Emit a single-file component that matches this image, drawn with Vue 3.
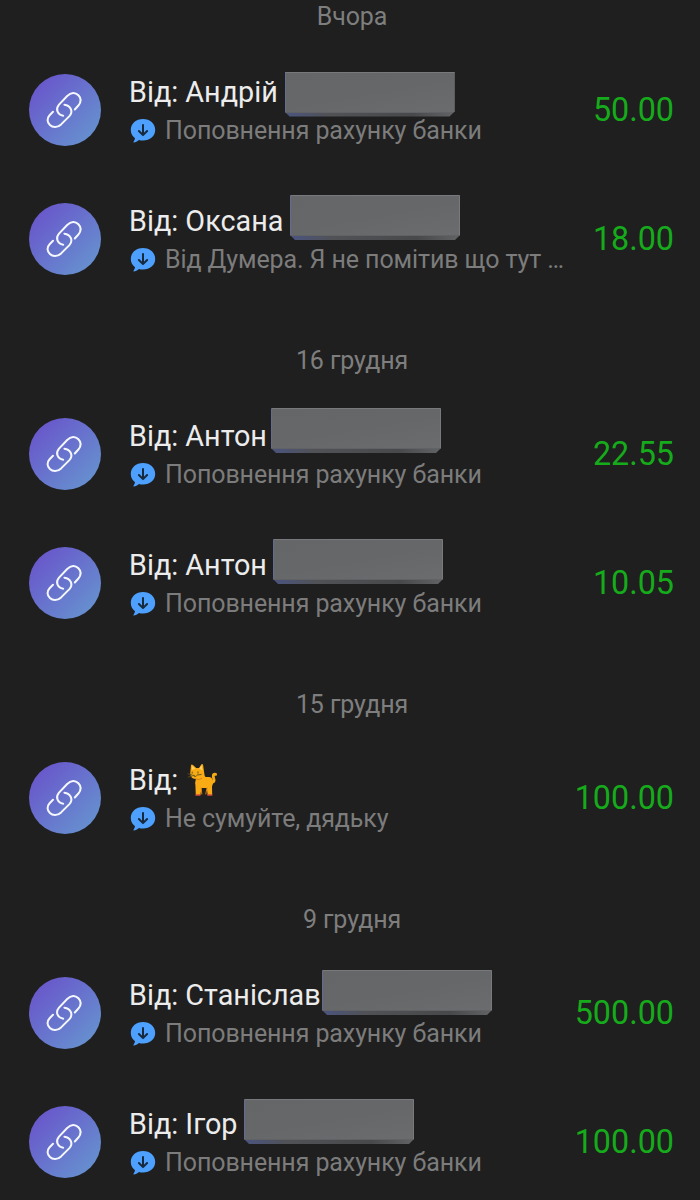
<template>
  <main class="history">
    <section v-for="group in groups" :key="group.date" class="group">
      <h2 class="group__date">{{ group.date }}</h2>
      <article v-for="(item, index) in group.items" :key="index" class="operation">
        <div class="operation__avatar">
          <svg class="link-icon" viewBox="0 0 40 40">
            <path d="M18.2 25.8C12.3 24.6 10.2 19 14 14.6L22.2 6C26 2.2 30.3 2.1 33.4 5.3C36.4 8.4 36.1 12.2 33.4 15.5L29.8 19.5" />
            <path d="M19.4 14.7C25.7 15.5 28.5 21.6 24.4 26.1L16.1 34.4C12.4 37.8 7.8 37.9 4.9 35C1.9 32.2 1.8 28.2 4.6 25.2L8 21.8" />
          </svg>
        </div>
        <div class="operation__info">
          <div class="operation__name">
            <span>Від: {{ item.name }}</span>
            <svg v-if="item.cat" class="cat" viewBox="0 0 32 34">
              <path class="cat__tail" d="M22 17C25 21 28 19 26.7 15.5C25.8 12.8 26.2 10.4 28.6 11.4" />
              <path class="cat__body" d="M4 2.2Q4.5 .7 6 2L9.2 5H12L14.3 1.5Q15.5 .2 16.1 2L17 8.5C17.5 11.2 17.4 13 18.5 14H22C25.2 14.2 26.5 17 26 20.5L25 23.5L25.2 32H20.7L19.8 25H14.5L13.4 32H8.8L8.4 22C7.6 19.7 8.8 17.7 8.9 16C5 16 2.9 13.2 3.3 9.5Z" />
              <path class="cat__ear" d="M5 3L5.2 7L8.3 5.2ZM12.2 5.4L14.7 2.2L15.6 7.8Z" />
              <path class="cat__shade" d="M9 16.1Q12 17.5 14.8 15.4M14.2 25L14.8 31M20 25L18.8 31" />
              <path class="cat__face" d="M5.2 9V10.3M11 8.8V10.2M5.8 12.4H7.3M6.8 13Q8 14.5 9.4 13M5 12L1 10.8M5 13.2L1.2 14M10.2 12L14.2 11.5" />
              <path class="cat__feet" d="M9 32H13M20.8 32H24.8" />
            </svg>
          </div>
          <div class="operation__details">
            <svg class="bubble" viewBox="0 0 26 26">
              <path class="bubble__shape" d="M13 1.1C20 1.1 25.2 5.7 25.2 12C25.2 18.2 20 22.5 13 22.5C11.3 22.5 10.1 22.3 9 21.9C7.2 23.3 5.5 24.4 3.8 24.5C3.3 24.5 3.3 23.9 3.7 23.4C4.5 22.3 4.9 21.2 5 20.2C2.4 18.2 .8 15.5 .8 12C.8 5.7 6 1.1 13 1.1Z" />
              <path class="bubble__arrow" d="M13 7V17M8.9 13L13 17.1L17.1 13" />
            </svg>
            <span class="operation__comment">{{ item.comment }}</span>
          </div>
        </div>
        <div class="operation__amount">{{ item.amount }}</div>
        <div v-if="item.cover" class="cover" :style="{ left: item.cover[0] + 'px', top: item.cover[1] + 'px' }">
          <div class="cover__face"></div>
        </div>
      </article>
    </section>
  </main>
</template>

<script setup>
const topUp = 'Поповнення рахунку банки';

// cover: left and top of the plate that hides the surname
const groups = [
  {
    date: 'Вчора',
    items: [
      { name: 'Андрій', comment: topUp, amount: '50.00', cover: [284.5, 25.5] },
      { name: 'Оксана', comment: 'Від Думера. Я не помітив що тут …', amount: '18.00', cover: [290, 20] }
    ]
  },
  {
    date: '16 грудня',
    items: [
      { name: 'Антон', comment: topUp, amount: '22.55', cover: [271, 18] },
      { name: 'Антон', comment: topUp, amount: '10.05', cover: [273, 20] }
    ]
  },
  {
    date: '15 грудня',
    items: [
      { name: '', cat: true, comment: 'Не сумуйте, дядьку', amount: '100.00' }
    ]
  },
  {
    date: '9 грудня',
    items: [
      { name: 'Станіслав', comment: topUp, amount: '500.00', cover: [322, 21] },
      { name: 'Ігор', comment: topUp, amount: '100.00', cover: [244, 21] }
    ]
  }
];
</script>

<style>
body {
  margin: 0;
  background-color: #1f1f1f;
}
</style>

<style scoped>
.history {
  width: 700px;
  height: 1200px;
  overflow: hidden;
  background-color: #1f1f1f;
  font-family: Roboto, sans-serif;
}

.group:first-child {
  margin-top: -40px;
}

.group__date {
  box-sizing: border-box;
  height: 86px;
  margin: 0;
  padding: 41px 0 0 4px;
  color: #7e7e7e;
  font-size: 25px;
  font-weight: 400;
  letter-spacing: -0.1px;
  line-height: 32px;
  text-align: center;
}

.operation {
  position: relative;
  display: flex;
  box-sizing: border-box;
  height: 129px;
  padding: 28px 26px 0 28px;
}

.operation__avatar {
  display: flex;
  flex: none;
  align-items: center;
  justify-content: center;
  width: 72px;
  height: 72px;
  margin-left: 0.5px;
  border-radius: 50%;
  background: linear-gradient(135deg, #6957cb 12%, #6693cf 92%);
}

.link-icon {
  width: 40px;
  height: 40px;
  fill: none;
  stroke: #f5f7ff;
  stroke-width: 2;
  stroke-linecap: round;
  stroke-linejoin: round;
}

.operation__info {
  flex: 1;
  min-width: 0;
  padding-left: 28.5px;
}

.operation__name {
  display: flex;
  height: 36px;
  color: #ececec;
  font-size: 28.75px;
  line-height: 36px;
  white-space: nowrap;
}

.operation__details {
  display: flex;
  align-items: center;
  height: 42px;
  padding-left: 1px;
}

.bubble {
  flex: none;
  width: 26px;
  height: 26px;
  margin-right: 9px;
}

.bubble__shape {
  fill: #4da0fd;
}

.bubble__arrow {
  fill: none;
  stroke: #17293d;
  stroke-width: 2;
  stroke-linecap: round;
  stroke-linejoin: round;
}

.operation__comment {
  color: #7c7c7c;
  font-size: 25px;
  letter-spacing: -0.1px;
  line-height: 32px;
  white-space: nowrap;
}

.operation__amount {
  flex: none;
  color: #16ab1b;
  font-size: 32.3px;
  line-height: 73px;
}

.cover {
  position: absolute;
  width: 170px;
  height: 45px;
  background: linear-gradient(90deg, #4b5480 0%, #505256 25%, #48494a 75%, #626364 100%);
  clip-path: polygon(0 1px, 1px 0, 169px 0, 170px 1px, 170px 40px, 165px 45px, 5px 45px, 0 40px);
}

.cover__face {
  box-sizing: border-box;
  height: 41px;
  border: 1px solid #77797d;
  border-bottom-color: #606265;
  border-left-color: #656c91;
  background: linear-gradient(170deg, #646668, #666769 50%, #6b6c6e);
}

.cat {
  width: 32px;
  height: 34px;
  margin: 1px 0 0 9px;
}

.cat path {
  fill: none;
  stroke-linecap: round;
  stroke-linejoin: round;
}

.cat .cat__body {
  fill: #f9ab16;
}

.cat .cat__tail {
  stroke: #f9ab16;
  stroke-width: 2.8;
}

.cat .cat__ear {
  fill: #ffd065;
}

.cat .cat__shade {
  stroke: #d78214;
  stroke-width: 1;
}

.cat .cat__face {
  stroke: #59501f;
  stroke-width: 0.9;
}

.cat .cat__feet {
  stroke: #d94b3d;
  stroke-width: 1.4;
}
</style>
